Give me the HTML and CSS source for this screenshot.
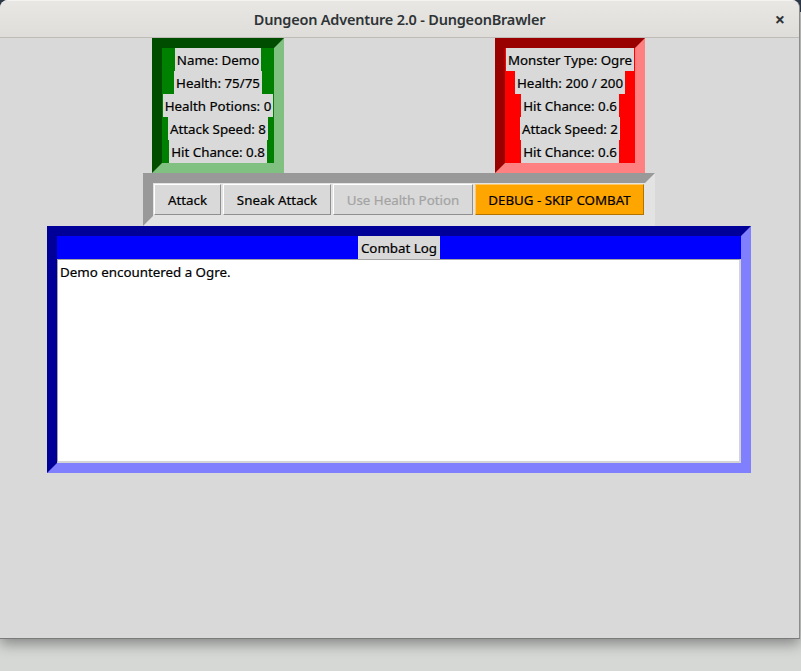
FILE: index.html
```html
<!DOCTYPE html>
<html lang="en">
<head>
<meta charset="utf-8">
<title>Dungeon Adventure 2.0 - DungeonBrawler</title>
<link rel="stylesheet" href="styles.css">
</head>
<body>
<div class="window">
  <div class="titlebar">
    <span class="title">Dungeon Adventure 2.0 - DungeonBrawler</span>
    <span class="close">×</span>
  </div>
  <div class="content">
    <div class="stats-row">
      <div class="panel hero">
        <span class="stat">Name: Demo</span>
        <span class="stat">Health: 75/75</span>
        <span class="stat">Health Potions: 0</span>
        <span class="stat">Attack Speed: 8</span>
        <span class="stat">Hit Chance: 0.8</span>
      </div>
      <div class="panel monster">
        <span class="stat">Monster Type: Ogre</span>
        <span class="stat">Health: 200 / 200</span>
        <span class="stat">Hit Chance: 0.6</span>
        <span class="stat">Attack Speed: 2</span>
        <span class="stat">Hit Chance: 0.6</span>
      </div>
    </div>
    <div class="actions">
      <button class="btn btn-attack">Attack</button>
      <button class="btn btn-sneak">Sneak Attack</button>
      <button class="btn btn-potion" disabled>Use Health Potion</button>
      <button class="btn btn-debug">DEBUG - SKIP COMBAT</button>
    </div>
    <div class="log">
      <div class="log-head"><span class="log-title">Combat Log</span></div>
      <div class="log-body">Demo encountered a Ogre.</div>
    </div>
  </div>
</div>
</body>
</html>
```

FILE: styles.css
```css
html, body {
  margin: 0;
  padding: 0;
}
body {
  width: 801px;
  height: 671px;
  overflow: hidden;
  background: linear-gradient(#2f3b4b 0, #2f3b4b 12px, #d6d8d6 12px);
  font-family: "Noto Sans", "Open Sans", sans-serif;
}
.window {
  box-sizing: border-box;
  width: 800px;
  height: 639px;
  border-right: 1px solid #8c8c8c;
  border-bottom: 1px solid #7a7a7a;
  border-radius: 8px 8px 0 0;
  overflow: hidden;
  display: flex;
  flex-direction: column;
  box-shadow: 0 5px 14px rgba(0, 0, 0, 0.38);
  background: #d9d9d9;
}
.titlebar {
  flex: none;
  box-sizing: border-box;
  height: 38px;
  border-bottom: 1px solid #bfbcb7;
  border-top: 1px solid #f4f3f1;
  background: linear-gradient(#e9e7e4, #dfddda);
  display: flex;
  align-items: center;
  justify-content: center;
  position: relative;
  color: #2e3436;
}
.title {
  font-size: 14.5px;
  font-weight: 600;
  letter-spacing: -0.2px;
}
.close {
  position: absolute;
  right: 14px;
  top: 6px;
  font-size: 18px;
  font-weight: 700;
}
.content {
  flex: 1;
  background: #d9d9d9;
  display: flex;
  flex-direction: column;
  align-items: flex-start;
}
.stats-row {
  display: flex;
  margin-left: 152px;
  gap: 211px;
}
.panel {
  box-sizing: border-box;
  height: 135px;
  border: 10px solid;
  display: flex;
  flex-direction: column;
  align-items: center;
}
.hero {
  width: 132px;
  background: #008000;
  border-color: #004d00 #80c080 #80c080 #004d00;
}
.monster {
  width: 150px;
  background: #ff0000;
  border-color: #990000 #ff8080 #ff8080 #990000;
}
.stat {
  box-sizing: border-box;
  height: 23px;
  padding: 1px 2px 0;
  line-height: 22px;
  background: #d9d9d9;
  font-size: 13.33px;
  color: #000;
  -webkit-text-stroke: 0.2px #000;
  white-space: nowrap;
}
.actions {
  box-sizing: border-box;
  margin-left: 143px;
  width: 512px;
  height: 53px;
  border: 10px solid;
  border-color: #999999 #e3e3e3 #e3e3e3 #999999;
  background: #e3e3e3;
  padding: 1px;
  display: flex;
  gap: 2px;
}
.btn {
  box-sizing: border-box;
  height: 31px;
  margin: 0;
  padding: 1px 0 0;
  border: 1px solid;
  border-color: #ffffff #8f8f8f #8f8f8f #ffffff;
  background: #d9d9d9;
  font-family: "Noto Sans", "Open Sans", sans-serif;
  font-size: 13.33px;
  color: #000;
  -webkit-text-stroke: 0.2px currentColor;
  text-align: center;
}
.btn-attack { width: 67px; }
.btn-sneak { width: 108px; }
.btn-potion { width: 140px; color: #a3a3a3; }
.btn-debug {
  width: 169px;
  background: #ffa500;
  border-color: #ffc966 #b37300 #b37300 #ffc966;
}
.log {
  box-sizing: border-box;
  margin-left: 47px;
  width: 704px;
  height: 247px;
  border: 10px solid;
  border-color: #000099 #8080ff #8080ff #000099;
  background: #0000ff;
  display: flex;
  flex-direction: column;
}
.log-head {
  height: 23px;
  display: flex;
  justify-content: center;
}
.log-title {
  box-sizing: border-box;
  background: #d9d9d9;
  padding: 1px 3px 0;
  line-height: 22px;
  font-size: 13.33px;
  color: #000;
  -webkit-text-stroke: 0.2px #000;
}
.log-body {
  flex: 1;
  background: #ffffff;
  border-style: solid;
  border-width: 1px 2px 2px 1px;
  border-color: #a3a3a3 #d4d4d4 #d4d4d4 #a3a3a3;
  padding: 2px 2px 0;
  line-height: 20px;
  font-size: 13.33px;
  color: #000;
  -webkit-text-stroke: 0.2px #000;
}
```
